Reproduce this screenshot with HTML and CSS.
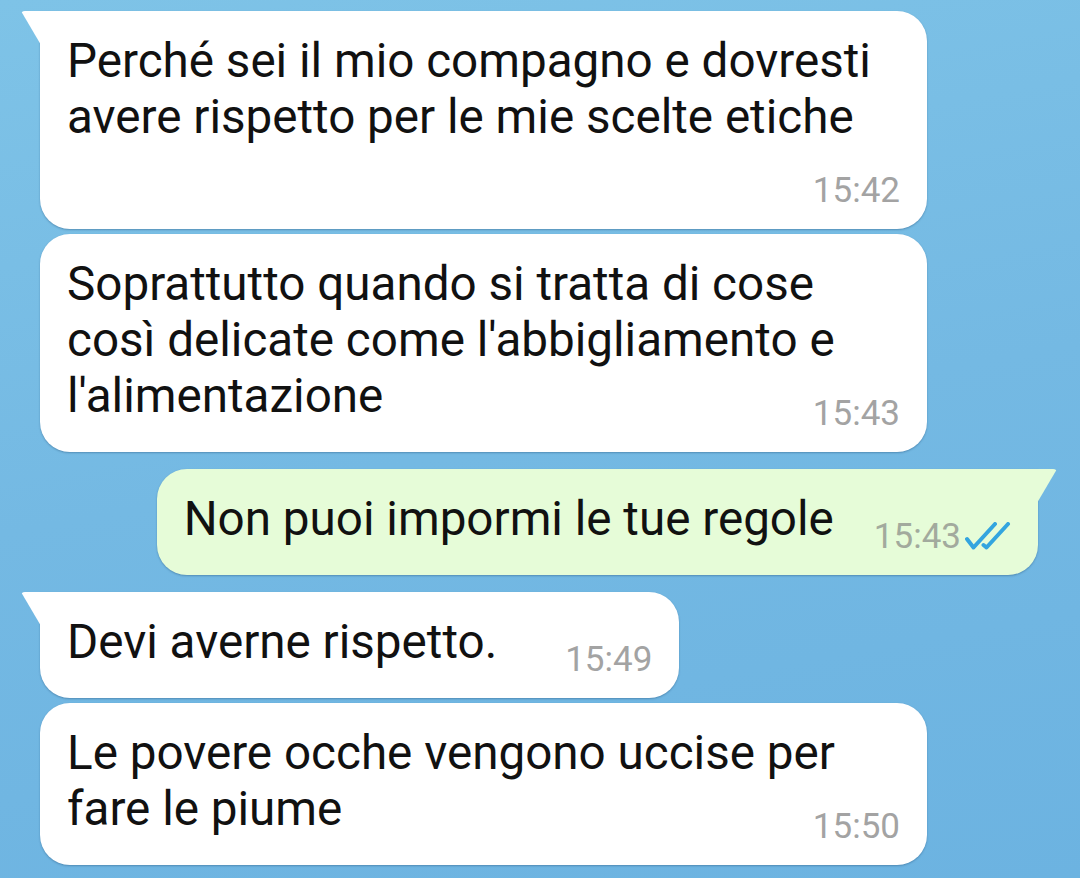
FILE: index.html
```html
<!DOCTYPE html>
<html lang="it">
<head>
    <meta charset="UTF-8">
    <meta name="viewport" content="width=device-width, initial-scale=1.0">
    <title>Chat</title>
    <link rel="stylesheet" href="styles.css">
</head>
<body>
    <div class="chat">
        <div class="bubble in first">
            Perché sei il mio compagno e dovresti avere rispetto per le mie scelte etiche<span class="meta">15:42</span>
        </div>
        <div class="bubble in">
            Soprattutto quando si tratta di cose così delicate come l'abbigliamento e l'alimentazione<span class="meta">15:43</span>
        </div>

        <div class="bubble out first">
            Non puoi impormi le tue regole<span class="meta">15:43
                <svg class="checks" viewBox="0 0 46 30" width="46" height="30">
                    <polyline points="2,17 8.5,25.5 30,2" />
                    <polyline points="18.5,23 21.5,25.5 43,2" />
                </svg>
            </span>
        </div>

        <div class="bubble in first">
            Devi averne rispetto.<span class="meta wide">15:49</span>
        </div>
        <div class="bubble in">
            Le povere ocche vengono uccise per fare le piume<span class="meta">15:50</span>
        </div>
    </div>
</body>
</html>
```

FILE: styles.css
```css
body {
    margin: 0;
    height: 100vh;
    overflow: hidden;
    background: linear-gradient(170deg, #7ec3e7 0%, #74b9e3 50%, #6cb3e1 100%);
    font-family: Roboto, 'Noto Sans', sans-serif;
    color: #111111;
}
.chat {
    display: flex;
    flex-direction: column;
    align-items: flex-start;
    padding: 11px 42px 0 40px;
}
.bubble {
    position: relative;
    display: flow-root;
    box-sizing: border-box;
    max-width: 887px;
    padding: 22px 27px 10px 27px;
    margin-top: 5px;
    background-color: #ffffff;
    border-radius: 30px;
    box-shadow: 0 1px 2px rgba(20, 60, 100, 0.35);
    font-size: 47.6px;
    line-height: 56px;
}
.bubble.first {
    margin-top: 17px;
}
.bubble:first-child {
    margin-top: 0;
}
.bubble.in.first {
    border-top-left-radius: 0;
}
/* coda del fumetto */
.bubble.first::before {
    content: "";
    position: absolute;
    top: 0;
    width: 20px;
    height: 34px;
    background-color: inherit;
}
.bubble.in.first::before {
    left: -19px;
    border-top-left-radius: 4px;
    clip-path: polygon(0 0, 100% 0, 100% 100%);
}
.bubble.out {
    align-self: flex-end;
    background-color: #e6fcd8;
    border-top-right-radius: 0;
}
.bubble.out.first::before {
    right: -19px;
    border-top-right-radius: 4px;
    clip-path: polygon(0 0, 100% 0, 0 100%);
}
.meta {
    float: right;
    display: flex;
    align-items: baseline;
    margin-top: 18px;
    margin-left: 40px;
    font-size: 35px;
    line-height: 56px;
    color: #a3a3a3;
}
.meta.wide {
    margin-left: 68px;
}
.out .meta {
    color: #a2aa9d;
}
.checks {
    margin-left: 4px;
    align-self: center;
    fill: none;
    stroke: #33a5df;
    stroke-width: 4;
    stroke-linecap: round;
    stroke-linejoin: round;
}
```
